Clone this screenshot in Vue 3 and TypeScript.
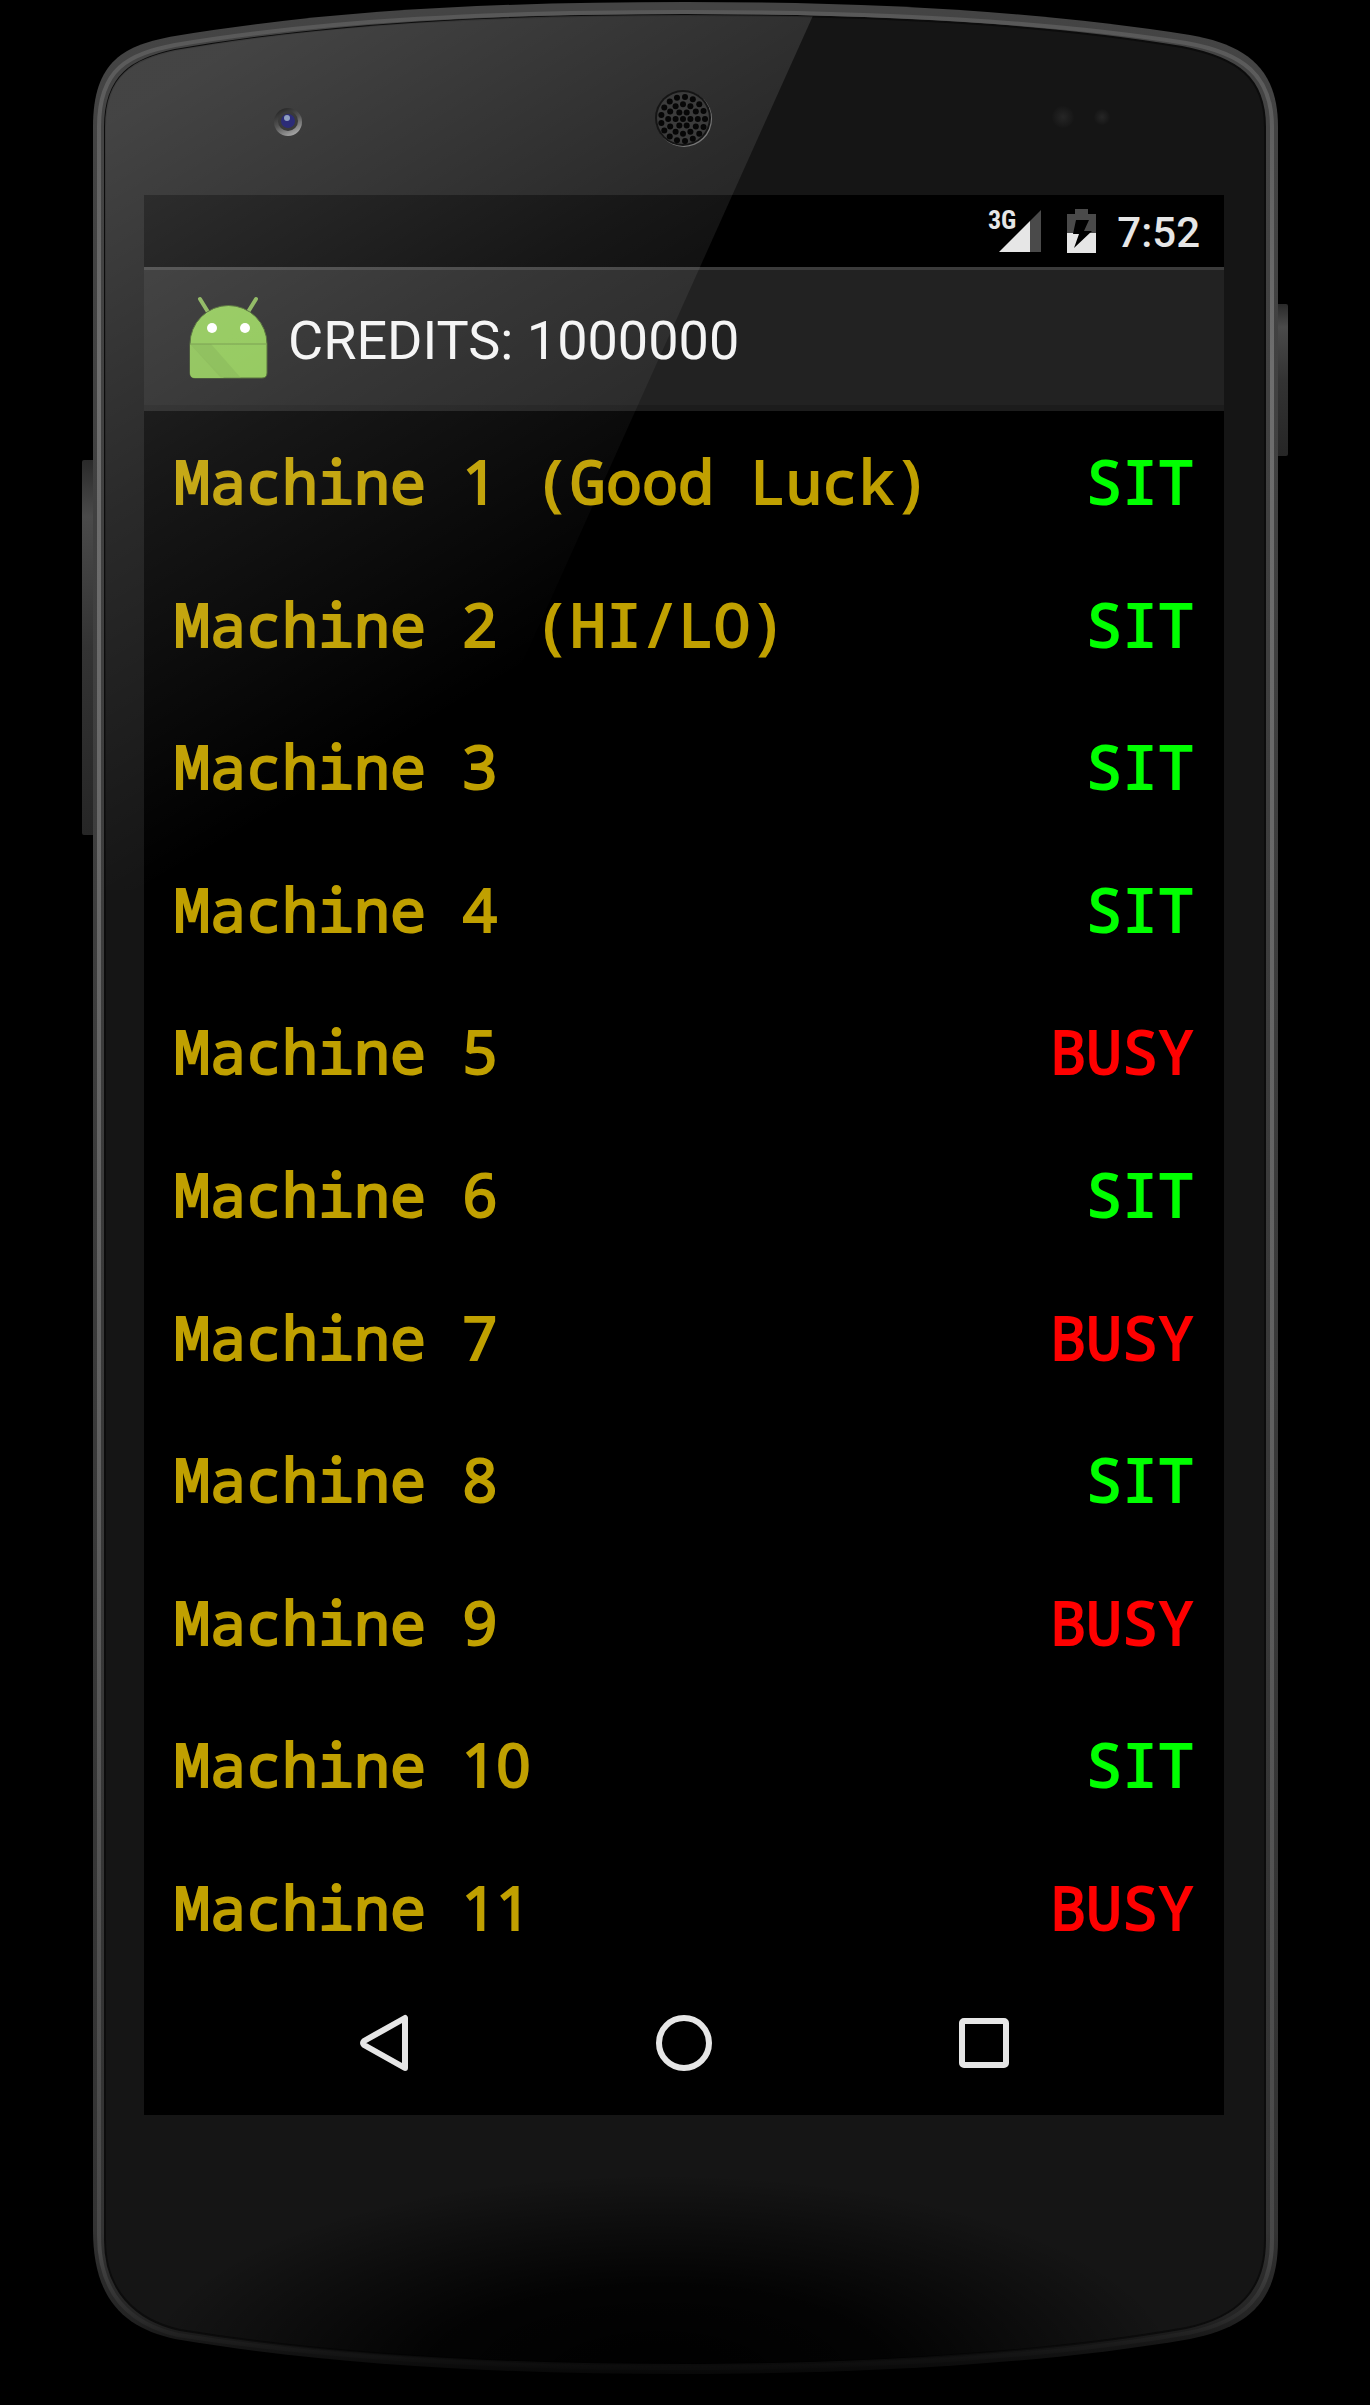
<script setup lang="ts">
interface Machine {
  id: number
  game?: string
  busy: boolean
}

const credits = 1000000

const machines: Machine[] = [
  { id: 1, game: 'Good Luck', busy: false },
  { id: 2, game: 'HI/LO', busy: false },
  { id: 3, busy: false },
  { id: 4, busy: false },
  { id: 5, busy: true },
  { id: 6, busy: false },
  { id: 7, busy: true },
  { id: 8, busy: false },
  { id: 9, busy: true },
  { id: 10, busy: false },
  { id: 11, busy: true },
]

// Earpiece holes: one in the middle and three rings round it.
const holes = [
  [0, 1],
  [7.4, 6],
  [14.8, 12],
  [22, 17],
].flatMap(([radius, count]) =>
  Array.from({ length: count }, (_, i) => {
    const angle = (i / count) * Math.PI * 2
    return { x: 683 + radius * Math.cos(angle), y: 119 + radius * Math.sin(angle) }
  }),
)

const outer =
  'M93 127 C93 60 125 45 175 36 C330 10 500 2 685 2 C870 2 1040 11 1190 35 C1248 45 1278 70 1278 127 V2240 C1278 2300 1250 2327 1190 2339 C1040 2365 850 2374 685 2374 C500 2374 330 2365 175 2339 C125 2328 93 2300 93 2230 Z'
const inner =
  'M105 127 C105 75 133 59 175 50 C330 23 500 15 685 15 C870 15 1040 23 1182 47 C1238 58 1265 78 1265 127 V2240 C1265 2290 1238 2317 1186 2328 C1040 2354 850 2364 685 2364 C500 2364 330 2355 180 2330 C135 2320 105 2290 105 2240 Z'
const rim =
  'M99 127 C99 68 129 54 175 45 C330 19 500 12 685 12 C870 12 1040 20 1186 43 C1243 53 1272 75 1272 127 V2240 C1272 2295 1244 2322 1188 2333 C1040 2359 850 2368 685 2368 C500 2368 330 2359 178 2335 C130 2324 99 2295 99 2235 Z'
</script>

<template>
  <div class="page">
    <svg class="shell" viewBox="0 0 1370 2405" preserveAspectRatio="none" aria-hidden="true">
      <defs>
        <linearGradient id="edge" x1="0" y1="0" x2="0" y2="1">
          <stop offset="0" stop-color="#444" />
          <stop offset="0.94" stop-color="#333" />
          <stop offset="0.975" stop-color="#242424" />
          <stop offset="1" stop-color="#080808" />
        </linearGradient>
        <linearGradient id="rim" x1="0" y1="0" x2="0" y2="1">
          <stop offset="0" stop-color="#585858" />
          <stop offset="0.15" stop-color="#6e6e6e" />
          <stop offset="0.6" stop-color="#606060" />
          <stop offset="0.95" stop-color="#474747" />
          <stop offset="0.98" stop-color="#2a2a2a" />
          <stop offset="1" stop-color="#0c0c0c" />
        </linearGradient>
        <linearGradient id="key" x1="0" y1="0" x2="0" y2="1">
          <stop offset="0" stop-color="#2a2a2a" />
          <stop offset="0.15" stop-color="#4a4a4a" />
          <stop offset="0.5" stop-color="#333" />
          <stop offset="1" stop-color="#262626" />
        </linearGradient>
        <radialGradient id="chin" gradientUnits="userSpaceOnUse" cx="0" cy="0" r="1" gradientTransform="translate(660 2374) scale(520 200)">
          <stop offset="0" stop-color="#000" />
          <stop offset="0.45" stop-color="#000" stop-opacity="0.85" />
          <stop offset="1" stop-color="#000" stop-opacity="0" />
        </radialGradient>
        <radialGradient id="sensor">
          <stop offset="0" stop-color="#262626" />
          <stop offset="1" stop-color="#161616" />
        </radialGradient>
        <linearGradient id="lens" x1="0.2" y1="0" x2="0.7" y2="1">
          <stop offset="0" stop-color="#222" />
          <stop offset="0.5" stop-color="#555" />
          <stop offset="1" stop-color="#aaa" />
        </linearGradient>
      </defs>
      <rect x="82" y="460" width="14" height="375" rx="2" fill="url(#key)" />
      <rect x="1274" y="304" width="14" height="152" rx="2" fill="url(#key)" />
      <path :d="outer" fill="url(#edge)" />
      <path :d="inner" fill="#151515" stroke="#0c0c0c" stroke-width="2" />
      <path :d="rim" fill="none" stroke="url(#rim)" stroke-width="4" />
      <path :d="inner" fill="url(#chin)" />
      <circle cx="1063" cy="117" r="11" fill="url(#sensor)" />
      <circle cx="1102" cy="117" r="8" fill="url(#sensor)" />
    </svg>

    <div class="screen">
      <header class="status">
        <div class="signal">
          <span class="network">3G</span>
          <svg width="42" height="42" viewBox="0 0 42 42" aria-hidden="true">
            <path d="M42 0V42H31V11Z" fill="#4a4a4a" />
            <path d="M31 11V42H0Z" fill="#e6e6e6" />
          </svg>
        </div>
        <svg class="battery" width="29" height="44" viewBox="0 0 29 44" aria-hidden="true">
          <path d="M8 0H21V5H29V24H0V5H8Z" fill="#4a4a4a" />
          <path d="M0 24H29V44H0Z" fill="#e6e6e6" />
          <path d="M9 11H22L17 22H25L7 39L12 25H6Z" fill="#000" />
        </svg>
        <time class="clock">7:52</time>
      </header>

      <div class="actionbar">
        <svg class="logo" width="96" height="96" viewBox="0 1 96 96" aria-hidden="true">
          <path d="M19 10L27 23M75 10L67 23" stroke="#84b152" stroke-width="4" stroke-linecap="round" />
          <path d="M9 55A38 38 0 0 1 86 55V84Q86 89 81 89H14Q9 89 9 84Z" fill="#8bc550" stroke="#466328" stroke-width="1" />
          <path d="M9 55L43 89H14Q9 89 9 84Z" fill="#88c04f" />
          <path d="M9 55H30L60 89H40Z" fill="#7aae46" opacity="0.5" />
          <path d="M9 55H86" stroke="#6a953c" stroke-width="1" />
          <circle cx="31" cy="39" r="5" fill="#fff" />
          <circle cx="64" cy="39" r="5" fill="#fff" />
        </svg>
        <h1 class="title">CREDITS: {{ credits }}</h1>
      </div>

      <ul class="machines">
        <li v-for="machine in machines" :key="machine.id" class="machine">
          <span>Machine <span class="number">{{ machine.id }}</span>{{ machine.game ? ` (${machine.game})` : '' }}</span>
          <button type="button" class="seat" :class="{ busy: machine.busy }">
            {{ machine.busy ? 'BUSY' : 'SIT' }}
          </button>
        </li>
      </ul>

      <nav class="navbar">
        <button type="button" class="key" aria-label="Back">
          <svg width="60" height="60" viewBox="0 0 60 60">
            <path d="M51 5V55L10 32Q8 30 10 28Z" fill="none" stroke="#e6e6e6" stroke-width="6" stroke-linejoin="round" />
          </svg>
        </button>
        <button type="button" class="key" aria-label="Home">
          <svg width="60" height="60" viewBox="0 0 60 60">
            <circle cx="30" cy="30" r="25" fill="none" stroke="#e6e6e6" stroke-width="6" />
          </svg>
        </button>
        <button type="button" class="key" aria-label="Recent apps">
          <svg width="60" height="60" viewBox="0 0 60 60">
            <rect x="8" y="8" width="44" height="44" rx="2" fill="none" stroke="#e6e6e6" stroke-width="6" />
          </svg>
        </button>
      </nav>
    </div>

    <svg class="shell glare" viewBox="0 0 1370 2405" preserveAspectRatio="none" aria-hidden="true">
      <defs>
        <linearGradient id="shine" gradientUnits="userSpaceOnUse" x1="144" y1="100" x2="490" y2="690">
          <stop offset="0" stop-color="#fff" stop-opacity="0.2" />
          <stop offset="0.5" stop-color="#fff" stop-opacity="0.09" />
          <stop offset="1" stop-color="#fff" stop-opacity="0" />
        </linearGradient>
        <clipPath id="face"><path :d="inner" /></clipPath>
      </defs>
      <path d="M90 0H820L420 890H90Z" fill="url(#shine)" clip-path="url(#face)" />
      <circle cx="288" cy="122" r="14" fill="url(#lens)" />
      <circle cx="288" cy="121" r="10" fill="#3a3a3a" />
      <circle cx="288" cy="121" r="7" fill="#2c2c78" />
      <circle cx="287" cy="118" r="3" fill="#8f9fc0" />
      <circle cx="684" cy="119" r="28" fill="#777" />
      <circle cx="683" cy="118" r="28" fill="#151515" />
      <circle cx="683" cy="118" r="26" fill="#3b3b3b" />
      <circle v-for="(hole, i) in holes" :key="i" :cx="hole.x" :cy="hole.y" r="3" fill="#060606" />
    </svg>
  </div>
</template>

<style>
body {
  margin: 0;
  background: #000;
}
</style>

<style scoped>
.page {
  position: relative;
  display: grid;
  grid-template-columns: 144fr 1080fr 146fr;
  padding: 195px 0 290px;
  background: #000;
}

.shell {
  position: absolute;
  inset: 0;
  width: 100%;
  height: 100%;
}

.glare {
  pointer-events: none;
}

.screen {
  position: relative;
  grid-column: 2;
  display: flex;
  flex-direction: column;
  background: #000;
  font-family: Roboto, sans-serif;
}

.status {
  display: flex;
  align-items: center;
  justify-content: flex-end;
  height: 72px;
  padding-right: 24px;
  color: #e6e6e6;
}

.signal {
  position: relative;
  display: flex;
  margin-right: 26px;
}

.network {
  position: absolute;
  right: 25px;
  top: 0;
  font-family: 'Roboto Condensed', Roboto, sans-serif;
  font-size: 26px;
  font-weight: 700;
  line-height: 20px;
}

.battery {
  margin-right: 21px;
}

.clock {
  padding-top: 4px;
  font-size: 42px;
  font-weight: 500;
  line-height: 48px;
}

.actionbar {
  box-sizing: border-box;
  display: flex;
  align-items: center;
  gap: 11px;
  height: 144px;
  padding: 0 37px;
  border-top: 3px solid #3b3b3b;
  border-bottom: 6px solid #1c1c1c;
  background: #222;
}

.title {
  margin: 0;
  padding-top: 6px;
  color: #f4f4f4;
  font-size: 54px;
  font-weight: 400;
  line-height: 64px;
}

.machines {
  display: flex;
  flex-direction: column;
  height: 1568px;
  margin: 0;
  padding: 0;
  list-style: none;
}

.machine {
  flex: 1;
  display: flex;
  align-items: center;
  justify-content: space-between;
  padding: 0 30px 2px;
  color: #c0a000;
  font-family: 'Droid Sans Mono', 'Noto Sans Mono', 'DejaVu Sans Mono', monospace;
  font-size: 60px;
  line-height: 72px;
  white-space: pre;
  -webkit-text-stroke: 2px currentColor;
}

.number {
  display: inline-block;
  min-width: 36px;
  font-family: 'Noto Sans', sans-serif;
  text-align: center;
}

.seat {
  padding: 0;
  border: 0;
  background: none;
  color: #0f0;
  font: inherit;
}

.seat.busy {
  color: #f00;
}

.navbar {
  display: flex;
  justify-content: center;
  height: 128px;
  padding-bottom: 8px;
}

.key {
  display: flex;
  align-items: center;
  justify-content: center;
  width: 300px;
  padding: 0;
  border: 0;
  background: none;
}
</style>
